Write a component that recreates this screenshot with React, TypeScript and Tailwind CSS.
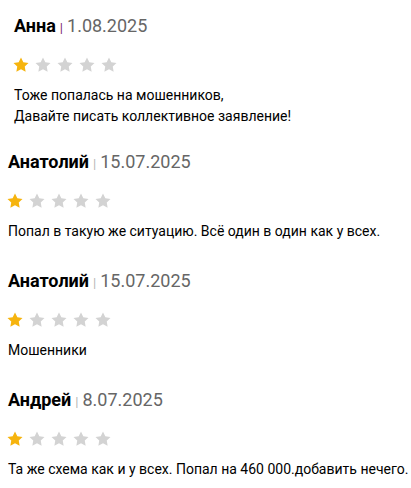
import React from "react";

type Review = {
  name: string;
  date: string;
  lines: string[];
  first?: boolean;
};

const reviews: Review[] = [
  {
    name: "Анна",
    date: "1.08.2025",
    lines: ["Тоже попалась на мошенников,", "Давайте писать коллективное заявление!"],
    first: true,
  },
  {
    name: "Анатолий",
    date: "15.07.2025",
    lines: ["Попал в такую же ситуацию. Всё один в один как у всех."],
  },
  { name: "Анатолий", date: "15.07.2025", lines: ["Мошенники"] },
  {
    name: "Андрей",
    date: "8.07.2025",
    lines: ["Та же схема как и у всех. Попал на 460 000.добавить нечего."],
  },
];

function Star({ on }: { on: boolean }) {
  return (
    <svg viewBox="0 0 24 24" className="h-[18px] w-[18px]">
      <path
        d="M12 2l3.09 6.26L22 9.27l-5 4.87 1.18 6.88L12 17.77l-6.18 3.25L7 14.14 2 9.27l6.91-1.01L12 2z"
        fill={on ? "#f6b40e" : "#d3d3d3"}
      />
    </svg>
  );
}

function Stars({ rating }: { rating: number }) {
  return (
    <div className="-ml-[2px] flex gap-1">
      {[1, 2, 3, 4, 5].map((i) => (
        <Star key={i} on={i <= rating} />
      ))}
    </div>
  );
}

export default function App() {
  return (
    <div
      className="flex w-[411px] flex-col bg-white pt-[14px] text-black"
      style={{ fontFamily: "Roboto, 'Liberation Sans', sans-serif" }}
    >
      {reviews.map((r, i) => (
        <div key={i} className={r.first ? "mb-[23px] pl-[14px]" : "mb-[28px] pl-2"}>
          <div className="flex h-6 items-baseline leading-6">
            <span className="text-[18px] font-bold">{r.name}</span>
            {r.first ? (
              <span className="mx-[4px] text-[13px] text-[#7b1d6e]">|</span>
            ) : (
              <span className="mx-[4px] text-[13px] text-[#b5b5b5]">|</span>
            )}
            <span className="text-[18px] text-[#666]">{r.date}</span>
          </div>
          <div className="mt-[18px]">
            <Stars rating={1} />
          </div>
          <div
            className={
              r.first ? "mt-[11px] text-[14px] leading-[21px]" : "mt-[11px] text-[14px] leading-5"
            }
          >
            {r.lines.map((l, j) => (
              <p key={j}>{l}</p>
            ))}
          </div>
        </div>
      ))}
    </div>
  );
}
